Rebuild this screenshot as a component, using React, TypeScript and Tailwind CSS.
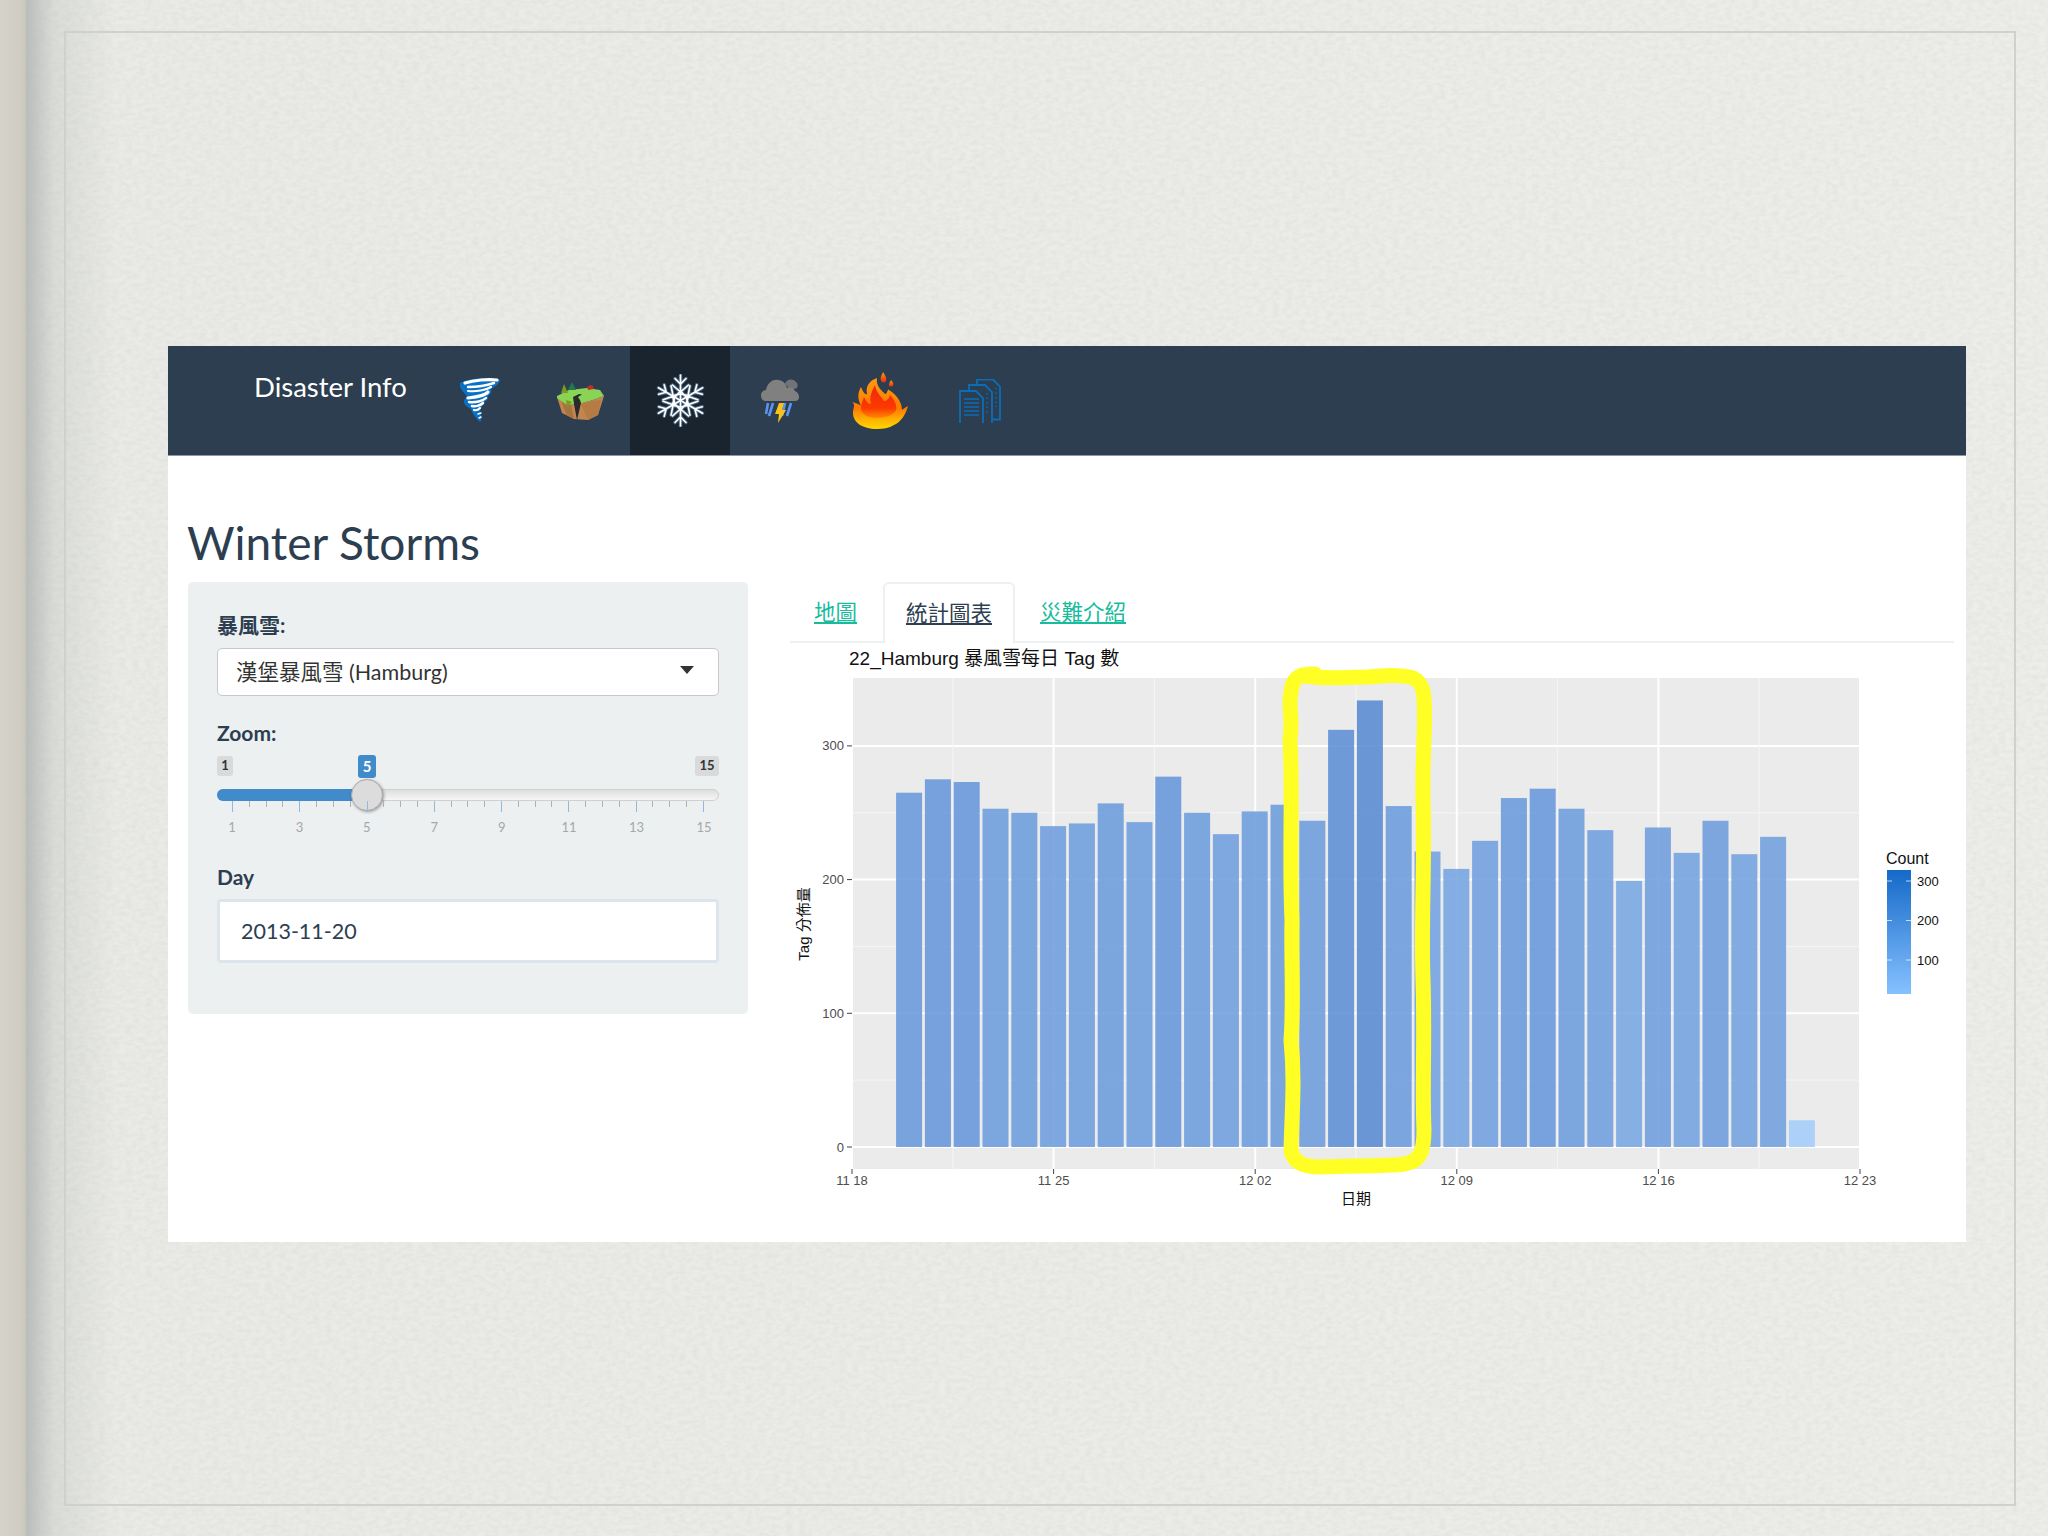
const VALUES = [265,275,273,253,250,240,242,257,243,277,250,234,251,256,244,312,334,255,221,208,229,261,268,253,237,199,239,220,244,219,232,20];

const UI_FONT = "font-['Lato','Noto_Sans_CJK_TC',sans-serif]";
const CHART_FONT = "'Liberation Sans','Noto Sans CJK TC',sans-serif";

function barColor(v: number) {
  const t = (v - 20) / 314;
  const mix = (a: number, b: number) => Math.round(a + (b - a) * t);
  return `rgb(${mix(165, 92)},${mix(205, 141)},${mix(249, 211)})`;
}

function Tornado() {
  return (
    <svg width="40" height="45" viewBox="0 0 40 45" className="mb-[3px]">
      <path d="M0 6C6 2 30 -1 40 3C39 8 34 10 31 12C32 15 31 17 28 19C29 22 26 24 23 26C22 29 21 32 20 34C21 38 23 41 20 45C15 40 12 36 11 32C7 30 3 27 4 23C6 21 7 20 6 18C2 14 -1 10 0 6Z" fill="#0a70c4" />
      <g fill="none" stroke="#fff" strokeLinecap="round">
        <path d="M5 6C14 3 28 2 37 3" strokeWidth="3.2" />
        <path d="M8 10C18 10 28 8 34 6" strokeWidth="2.4" />
        <path d="M8 14C16 15 26 13 31 10" strokeWidth="2.2" />
        <path d="M8 21C16 20 26 18 28 15" strokeWidth="3.2" />
        <path d="M9 25C15 26 23 24 26 21" strokeWidth="2.4" />
        <path d="M12 29C16 30 21 28 23 26" strokeWidth="2.6" />
        <path d="M14 33C17 34 19 32 20 31" strokeWidth="2.2" />
        <path d="M18 37L21 36M19 41L21 40" strokeWidth="1.4" />
      </g>
    </svg>
  );
}

function Island() {
  return (
    <svg width="47" height="38" viewBox="0 0 47 38">
      <polygon points="0,15 5,31 17,37 31,38 41,33 47,14 36,18 22,22 10,23" fill="#c2854f" />
      <polygon points="4,18 9,32 17,37 14,23" fill="#a8733f" />
      <polygon points="24,22 31,38 41,33 44,18 36,19" fill="#b67a45" />
      <polygon points="0,14 12,8 30,6 43,8 47,14 36,18 22,22 10,23 0,16" fill="#8ad455" />
      <polygon points="16,15 22,12 25,12.500 21,15 23,18 24,21 20,38 17,22" fill="#2a2a2a" />
      <polygon points="7,2 11,11 4,11" fill="#7c9a1f" />
      <polygon points="15,0 19,8 11,8" fill="#1f7a52" />
      <polygon points="9,18 15,20 10,25" fill="#7c9a1f" />
      <polygon points="30,5 33,3 36,4 37,7 31,8" fill="#b8322a" />
    </svg>
  );
}

function Arm({ angle }: { angle: number }) {
  return (
    <g transform={`rotate(${angle} 26.5 26.5)`}>
      <path d="M26.5 26.5V1M21 4.500L26.5 10L32 4.500M18.500 11L26.500 18L34.500 11M21 23L26.500 17L32 23" />
    </g>
  );
}

function Snowflake() {
  const angles = [0, 60, 120, 180, 240, 300];
  return (
    <svg width="53" height="53" viewBox="0 0 53 53">
      <g fill="none" stroke="#6f95b8" strokeWidth="3.4" strokeLinecap="round" opacity="0.6">
        {angles.map((a) => <Arm key={a} angle={a} />)}
      </g>
      <g fill="none" stroke="#fff" strokeWidth="1.6" strokeLinecap="round">
        {angles.map((a) => <Arm key={a} angle={a} />)}
      </g>
    </svg>
  );
}

function Storm() {
  return (
    <svg width="38" height="45" viewBox="0 0 38 45">
      <path d="M24 6C25 1 32 0 35 4C37 5 37 8 36 10L30 12Z" fill="#707478" />
      <path d="M5 23C1 23 0 20 0 17C0 14 3 12 5 12C6 6 11 1 17 2C22 2 25 6 26 10C30 8 33 11 34 13C37 14 38 17 38 19C38 21 37 23 34 23Z" fill="#808080" />
      <g fill="none" stroke="#5b93f0" strokeWidth="2.6">
        <path d="M7 25L5 36" />
        <path d="M12 25L8 38" />
        <path d="M24 25L21 38" />
        <path d="M30 25L26 38" />
      </g>
      <polygon points="18,25 23,25 21,32 25,32 17,45 18,36 14,36" fill="#fbc31a" />
    </svg>
  );
}

function Fire() {
  return (
    <svg width="56" height="58" viewBox="0 0 56 58">
      <defs>
        <linearGradient id="fireOuter" x1="0" y1="0" x2="0" y2="1">
          <stop offset="0" stopColor="#ff9a10" />
          <stop offset="0.6" stopColor="#ff7a00" />
          <stop offset="0.84" stopColor="#ffb800" />
          <stop offset="1" stopColor="#ffd500" />
        </linearGradient>
        <linearGradient id="fireInner" x1="0" y1="0" x2="0" y2="1">
          <stop offset="0" stopColor="#f0260e" />
          <stop offset="0.7" stopColor="#fb3a00" />
          <stop offset="1" stopColor="#ff8a00" />
        </linearGradient>
        <linearGradient id="fireDrop" x1="0" y1="0" x2="0" y2="1">
          <stop offset="0" stopColor="#ff9a10" />
          <stop offset="1" stopColor="#f02a10" />
        </linearGradient>
      </defs>
      <path d="M25 57C10 57 1 50 1 41C1 35 4 33 0 30C5 31 8 33 9 34C5 26 6 20 9 15C11 20 13 23 15 22C13 13 19 8 25 6C24 12 27 16 31 20C33 22 34 23 35 20C36 18 36 17 37 18C44 22 50 30 50 38C51 37 54 35 56 34C54 42 49 50 42 53C37 56 31 57 25 57Z" fill="url(#fireOuter)" />
      <path d="M24 46C16 46 9 42 9 36C9 32 11 28 12 25C14 29 16 32 19 32C17 25 20 19 23 13C24 20 28 23 32 29C34 29 37 27 38 23C43 28 45 34 44 38C42 43 33 46 24 46Z" fill="url(#fireInner)" />
      <path d="M31 0C33 3 35 6 34 9C33 11 29 11 29 8C28 5 30 3 31 0Z" fill="url(#fireDrop)" />
      <path d="M39 8C41 10 42 12 41 13.500C40 15 37 15 37 13C37 11 38 10 39 8Z" fill="url(#fireDrop)" />
    </svg>
  );
}

function Docs() {
  const bg = "#2c3e50";
  const page = "M1 1H17L24 8V41H1Z";
  return (
    <svg width="43" height="44" viewBox="0 0 43 44">
      <g fill={bg} stroke="#0a6db8" strokeWidth="1.8">
        <path d={page} transform="translate(17 -0.500)" />
        <path d={page} transform="translate(9 5)" />
        <path d={page} transform="translate(0 11)" />
      </g>
      <g stroke="#0a6db8" strokeWidth="1.500">
        <path d="M5 20H20M5 24H20M5 28H20M5 32H20M5 36H20" />
      </g>
      <g stroke="#0a6db8" strokeWidth="1.500" strokeDasharray="1.500 3">
        <path d="M28 14V36M37 9V28" />
      </g>
    </svg>
  );
}

function NavTab({ active, children }: { active?: boolean; children: React.ReactNode }) {
  return (
    <div className={`flex h-full w-[100px] items-center justify-center ${active ? "bg-[#1a242f]" : ""}`}>
      {children}
    </div>
  );
}

function Sidebar() {
  const ticks = Array.from({ length: 29 }, (_, i) => i);
  const labels = [1, 3, 5, 7, 9, 11, 13, 15];
  return (
    <div className="flex h-[432px] w-[560px] shrink-0 flex-col rounded-[5px] bg-[#ecf0f1] px-[29px] pt-[29px]">
      <div className="h-[28px] text-[21px] font-bold leading-[28px] text-[#2c3e50]">暴風雪:</div>
      <div className="mt-[9px] flex h-[48px] items-center justify-between rounded-[5px] border border-[#c8c8c8] bg-white pl-[18px] pr-[24px] text-[21.5px] text-[#333]">
        <span>漢堡暴風雪 (Hamburg)</span>
        <span className="mb-[4px] h-0 w-0 border-x-[7px] border-t-[8px] border-x-transparent border-t-[#333]" />
      </div>
      <div className="mt-[23px] h-[28px] text-[21px] font-bold leading-[28px] text-[#2c3e50]">Zoom:</div>
      <div className="relative mt-[9px] h-[96px]">
        <span className="absolute left-0 top-0 flex h-[20px] w-[16px] items-center justify-center rounded-[3px] bg-[#d8dadb] text-[13px] font-bold text-[#333]">1</span>
        <span className="absolute left-[141px] -top-[1px] flex h-[23px] w-[18px] items-center justify-center rounded-[3px] bg-[#428bca] text-[15px] font-bold text-white">5</span>
        <span className="absolute right-0 top-0 flex h-[20px] w-[24px] items-center justify-center rounded-[3px] bg-[#d8dadb] text-[13px] font-bold text-[#333]">15</span>
        <div className="absolute inset-x-0 top-[33px] h-[12px] rounded-full border border-[#d0d0d0] bg-[linear-gradient(#dedede,#f6f6f6)]" />
        <div className="absolute left-0 top-[33px] h-[12px] w-[140px] rounded-l-full bg-[#428bca]" />
        <div className="absolute left-[134px] top-[23px] h-[32px] w-[32px] rounded-full border border-[#aaa] bg-[#dcdcdc] shadow-[1px_1px_3px_rgba(0,0,0,0.35)]" />
        <div className="absolute left-[15px] right-[15px] top-[45px] flex items-start justify-between">
          {ticks.map((i) => (
            <span key={i} className={i % 4 === 0 ? "h-[11px] w-px bg-[#8fb9e0]" : "h-[6px] w-px bg-[#b0b0b0]"} />
          ))}
        </div>
        <div className="absolute left-[15px] right-[15px] top-[63px] flex justify-between">
          {labels.map((n) => (
            <span key={n} className="flex w-0 justify-center text-[13px] leading-[16px] text-[#a3a8ab]">{n}</span>
          ))}
        </div>
      </div>
      <div className="mt-[11px] h-[28px] text-[21px] font-bold leading-[28px] text-[#2c3e50]">Day</div>
      <div className="mt-[8px] flex h-[64px] items-center rounded-[4px] border-[3px] border-[#dce4ec] bg-white pl-[21px] text-[21.5px] text-[#2c3e50]">2013-11-20</div>
    </div>
  );
}

function Tabs() {
  return (
    <div className="flex h-[61px] border-b-2 border-[#ecf0f1] pl-[7px] text-[21.5px]">
      <div className="flex w-[86px] items-center pl-[17px] pt-[2px] text-[#18bc9c] underline">地圖</div>
      <div className="-mb-[2px] flex w-[132px] items-center justify-center rounded-t-[6px] border-2 border-b-0 border-[#ecf0f1] bg-white text-[#2c3e50] underline">統計圖表</div>
      <div className="flex items-center pl-[25px] pt-[2px] text-[#18bc9c] underline">災難介紹</div>
    </div>
  );
}

function Chart() {
  const px = (d: number) => 852 + 28.8 * d;
  const py = (v: number) => 1147 - v * 1.337;
  const majorX = [0, 7, 14, 21, 28, 35];
  const minorX = [3.5, 10.5, 17.5, 24.5, 31.5];
  const xLabels = ["11 18", "11 25", "12 02", "12 09", "12 16", "12 23"];
  const yMajor = [0, 100, 200, 300];
  const yMinor = [50, 150, 250];
  return (
    <svg width="1164" height="599" viewBox="790 643 1164 599" style={{ fontFamily: CHART_FONT }} className="block">
      <text x="849" y="665" fontSize="19" fill="#111">22_Hamburg 暴風雪每日 Tag 數</text>
      <rect x="851" y="678" width="1010" height="491" fill="#ebebeb" />
      {yMinor.map((v) => <line key={v} x1="852" x2="1860" y1={py(v)} y2={py(v)} stroke="#f5f5f5" strokeWidth="1" />)}
      {yMajor.map((v) => <line key={v} x1="852" x2="1860" y1={py(v)} y2={py(v)} stroke="#fff" strokeWidth="2" />)}
      {minorX.map((d) => <line key={d} x1={px(d)} x2={px(d)} y1="678" y2="1169" stroke="#f5f5f5" strokeWidth="1" />)}
      {majorX.map((d) => <line key={d} x1={px(d)} x2={px(d)} y1="678" y2="1169" stroke="#fff" strokeWidth="2" />)}
      {VALUES.map((v, i) => (
        <rect key={i} x={px(i + 2) - 13.5} y={py(v)} width="26" height={v * 1.337} fill={barColor(v)} fillOpacity="0.9" />
      ))}
      {yMajor.map((v) => (
        <g key={v}>
          <line x1="847" x2="852" y1={py(v)} y2={py(v)} stroke="#444" />
          <text x="844" y={py(v) + 4.500} textAnchor="end" fontSize="13" fill="#4d4d4d">{v}</text>
        </g>
      ))}
      {majorX.map((d, i) => (
        <g key={d}>
          <line x1={px(d)} x2={px(d)} y1="1169" y2="1174" stroke="#444" />
          <text x={px(d)} y="1185" textAnchor="middle" fontSize="13" fill="#4d4d4d" xmlSpace="preserve">{xLabels[i]}</text>
        </g>
      ))}
      <text x="1356" y="1204" textAnchor="middle" fontSize="15" fill="#111">日期</text>
      <text transform="translate(809 924) rotate(-90)" textAnchor="middle" fontSize="15" fill="#111">Tag 分佈量</text>
      <defs>
        <linearGradient id="legendGrad" x1="0" y1="0" x2="0" y2="1">
          <stop offset="0" stopColor="#1569c8" />
          <stop offset="1" stopColor="#86c1ff" />
        </linearGradient>
      </defs>
      <text x="1886" y="864" fontSize="16" fill="#111">Count</text>
      <rect x="1887" y="870" width="24" height="124" fill="url(#legendGrad)" />
      {[881, 920.5, 960].map((y, i) => (
        <g key={y}>
          <line x1="1887" x2="1892" y1={y} y2={y} stroke="#fff" strokeOpacity="0.7" />
          <line x1="1906" x2="1911" y1={y} y2={y} stroke="#fff" strokeOpacity="0.7" />
          <text x="1917" y={y + 4.500} fontSize="13" fill="#111">{[300, 200, 100][i]}</text>
        </g>
      ))}
      <path
        d="M1302 675C1320 680 1345 677 1368 677C1385 675 1400 675 1410 677C1419 679 1424 688 1424 700C1426 722 1422 760 1423 800C1425 860 1421 920 1423 980C1425 1040 1422 1090 1424 1130C1424 1152 1420 1161 1405 1164C1380 1167 1350 1165 1320 1167C1303 1167 1293 1162 1291 1150C1292 1110 1295 1080 1291 1040C1294 1000 1291 960 1292 920C1289 860 1293 800 1290 740C1293 720 1288 705 1291 692C1292 680 1298 673 1315 674"
        fill="none"
        stroke="#ffff26"
        strokeWidth="15"
        strokeLinecap="round"
        strokeLinejoin="round"
      />
    </svg>
  );
}

export default function App() {
  return (
    <div className={`flex h-[1536px] w-[2048px] overflow-hidden ${UI_FONT}`}>
      <div className="h-full w-[26px] shrink-0 bg-[linear-gradient(90deg,#d6d3ca,#cfccc2_80%,#c9c7bd)]" />
      <div className="relative flex-1 bg-[linear-gradient(90deg,#b9bdbb_0px,#dadcd8_28px,#eaebe7_90px,#edeee9_100%)]">
        <svg className="absolute inset-0" width="2022" height="1536">
          <filter id="paper">
            <feTurbulence type="fractalNoise" baseFrequency="0.15 0.24" numOctaves="3" seed="4" />
            <feColorMatrix values="0 0 0 0 0.45  0 0 0 0 0.46  0 0 0 0 0.43  0.9 0 0 0 -0.28" />
          </filter>
          <rect width="2022" height="1536" filter="url(#paper)" opacity="0.3" />
        </svg>
        <div className="relative ml-[38px] mt-[31px] h-[1475px] w-[1952px] border-2 border-[#cfd1cc] pl-[102px] pt-[313px]">
          <div className="h-[896px] w-[1798px] bg-white">
            <nav className="flex h-[110px] border-b border-[#8d97a1] bg-[#2c3e50]">
              <div className="w-[262px] pl-[86px] pt-[25px] text-[27.5px] leading-[32px] text-white">Disaster Info</div>
              <NavTab><Tornado /></NavTab>
              <NavTab><Island /></NavTab>
              <NavTab active><Snowflake /></NavTab>
              <NavTab><Storm /></NavTab>
              <NavTab><Fire /></NavTab>
              <NavTab><Docs /></NavTab>
            </nav>
            <div className="pl-[20px]">
              <h1 className="-ml-px pt-[58px] text-[46px] font-normal leading-[57px] text-[#2c3e50]">Winter Storms</h1>
              <div className="flex pt-[11px]">
                <Sidebar />
                <div className="ml-[42px] w-[1164px] shrink-0">
                  <Tabs />
                  <Chart />
                </div>
              </div>
            </div>
          </div>
        </div>
      </div>
    </div>
  );
}
